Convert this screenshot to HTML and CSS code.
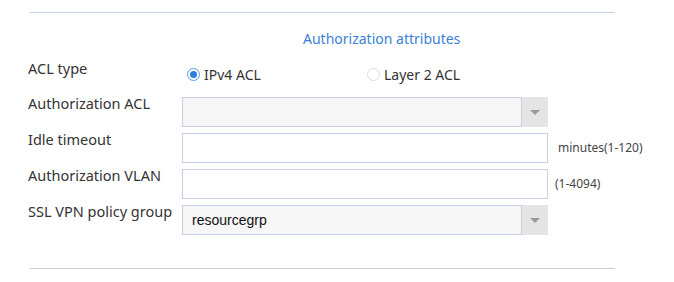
FILE: index.html
```html
<!DOCTYPE html>
<html lang="en">
<head>
  <meta charset="UTF-8" />
  <title>Authorization attributes</title>
  <link rel="stylesheet" href="styles.css">
</head>
<body>

  <div class="panel">
    <div class="panel-title">Authorization attributes</div>

    <div class="form-grid">
      <div class="label">ACL type</div>
      <div class="radios">
        <label class="radio checked"><span class="dot"></span>IPv4 ACL</label>
        <label class="radio"><span class="dot"></span>Layer 2 ACL</label>
      </div>
      <div></div>

      <div class="label">Authorization ACL</div>
      <div class="select">
        <div class="select-value"></div>
        <div class="select-arrow"></div>
      </div>
      <div></div>

      <div class="label">Idle timeout</div>
      <div class="input"></div>
      <div class="hint hint-wide">minutes(1-120)</div>

      <div class="label">Authorization VLAN</div>
      <div class="input"></div>
      <div class="hint">(1-4094)</div>

      <div class="label">SSL VPN policy group</div>
      <div class="select">
        <div class="select-value">resourcegrp</div>
        <div class="select-arrow"></div>
      </div>
      <div></div>
    </div>
  </div>

</body>
</html>
```

FILE: styles.css
```css
* {
  box-sizing: border-box;
}

body {
  margin: 0;
  background: #fff;
  font-family: "Noto Sans", "Open Sans", sans-serif;
  font-size: 14px;
  color: #333;
}

.panel {
  margin: 12px 59px 0 30px;
  border-top: 1px solid #c4d3e4;
  border-bottom: 1px solid #c8d0dc;
  padding-bottom: 33px;
}

.panel-title {
  margin: 16px 0 14px 273px;
  line-height: 19px;
  color: #3a7fd5;
}

.form-grid {
  display: grid;
  grid-template-columns: 152px 366px 1fr;
  grid-template-rows: 29px 30px 30px 30px 30px;
  row-gap: 6px;
}

.label {
  margin-top: -3px;
  margin-left: -2px;
  font-size: 14.5px;
  line-height: 19px;
  white-space: nowrap;
}

.radios {
  display: flex;
  align-items: center;
  height: 24px;
}

.radio {
  display: flex;
  align-items: center;
  width: 180px;
  padding-left: 5px;
}

.radio .dot {
  width: 13px;
  height: 13px;
  border-radius: 50%;
  border: 1px solid #dcdcdc;
  margin-right: 4px;
  position: relative;
}

.radio.checked .dot {
  border-color: #5a9be6;
}

.radio.checked .dot::after {
  content: "";
  position: absolute;
  left: 2px;
  top: 2px;
  width: 7px;
  height: 7px;
  border-radius: 50%;
  background: #2f7fe0;
}

.input {
  border: 1px solid #c5d1e2;
  background: #fff;
}

.select {
  display: flex;
}

.select-value {
  flex: 1;
  border: 1px solid #c5d1e2;
  background: #f6f6f6;
  padding-left: 9px;
  font-family: "Liberation Sans", Arial, sans-serif;
  font-size: 14px;
  color: #111;
  line-height: 28px;
}

.select-arrow {
  width: 26px;
  background: #e4e4e4;
  display: flex;
  align-items: center;
  justify-content: center;
}

.select-arrow::after {
  content: "";
  border-left: 5px solid transparent;
  border-right: 5px solid transparent;
  border-top: 5px solid #999;
}

.hint {
  padding-left: 7px;
  font-size: 12px;
  line-height: 30px;
  color: #444;
  white-space: nowrap;
}

.hint-wide {
  padding-left: 10px;
}
```
